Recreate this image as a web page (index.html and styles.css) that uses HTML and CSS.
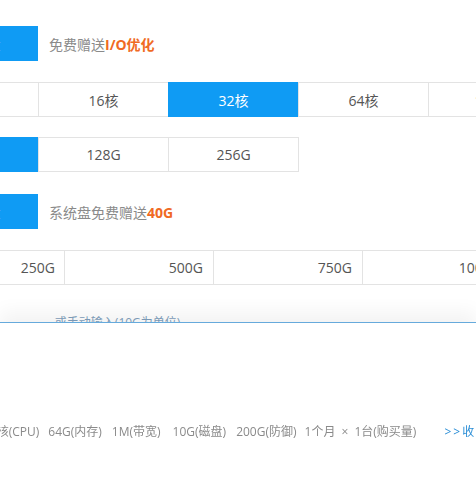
FILE: index.html
```html
<!DOCTYPE html>
<html lang="zh-CN">
<head>
<meta charset="utf-8">
<title>配置选择</title>
<link rel="stylesheet" href="styles.css">
</head>
<body>
<div class="page">
  <div class="row row-tag">
    <div class="opt opt-on">SSD云盘</div>
    <div class="note">免费赠送<b>I/O优化</b></div>
  </div>

  <div class="row row-opts full">
    <div class="opt">8核</div>
    <div class="opt">16核</div>
    <div class="opt opt-on">32核</div>
    <div class="opt">64核</div>
    <div class="opt">128核</div>
  </div>

  <div class="row row-opts">
    <div class="opt opt-on">64G</div>
    <div class="opt">128G</div>
    <div class="opt">256G</div>
  </div>

  <div class="row row-tag">
    <div class="opt opt-on">SSD云盘</div>
    <div class="note">系统盘免费赠送<b>40G</b></div>
  </div>

  <div class="row scale">
    <div class="seg seg-first">250G</div>
    <div class="seg">500G</div>
    <div class="seg">750G</div>
    <div class="seg">1000G</div>
  </div>

  <div class="hint">
    <span class="hint-a">-- </span><span class="hint-b">或手动输入(10G为单位)</span><span class="hint-c">--</span>
  </div>
</div>

<div class="bar">
  <div class="summary">
    <span class="item">32核(CPU)</span>
    <span class="item">64G(内存)</span>
    <span class="item">1M(带宽)</span>
    <span class="item">10G(磁盘)</span>
    <span class="item">200G(防御)</span>
    <span class="item item-qty">1个月 × 1台(购买量)</span>
    <a class="more" href="#">&gt;&gt;收藏配置</a>
  </div>
</div>
</body>
</html>
```

FILE: styles.css
```css
html, body {
  margin: 0;
  padding: 0;
  background: #fff;
  overflow: hidden;
}

body {
  font-family: "Open Sans", "Noto Sans CJK SC", sans-serif;
  font-size: 14px;
  color: #555;
  width: 476px;
  height: 477px;
}

.page {
  margin-left: -92px;
  width: 760px;
  padding-top: 26px;
}

.row {
  display: flex;
  align-items: stretch;
}

.row-tag {
  height: 35px;
  align-items: center;
}

.row-tag + .row-opts {
  margin-top: 21px;
}

.row-opts + .row-opts {
  margin-top: 20px;
}

.row-opts + .row-tag {
  margin-top: 22px;
}

.opt {
  box-sizing: border-box;
  flex: none;
  width: 130px;
  height: 35px;
  display: flex;
  align-items: center;
  justify-content: center;
  border: 1px solid #e3e3e3;
  border-right: 0;
  color: #555;
  background: #fff;
  white-space: nowrap;
}

.row-opts .opt:last-child {
  width: 131px;
  border-right: 1px solid #e3e3e3;
}

.opt-on {
  background: #0f9bf4;
  border-color: #0f9bf4;
  color: #fff;
}

.note {
  margin-left: 11px;
  color: #8a8a8a;
  white-space: nowrap;
}

.note b {
  color: #f06a23;
  font-weight: 700;
}

.scale {
  margin-top: 21px;
  height: 35px;
  border-top: 1px solid #e3e3e3;
  border-bottom: 1px solid #e3e3e3;
  box-sizing: border-box;
}

.seg {
  box-sizing: border-box;
  flex: none;
  width: 149px;
  display: flex;
  align-items: center;
  justify-content: flex-end;
  padding-right: 10px;
  border-right: 1px solid #e3e3e3;
  color: #555;
}

.seg-first {
  width: 157px;
  padding-right: 9px;
}

.hint {
  margin-top: 28px;
  padding-left: 92px;
  font-size: 12px;
  color: #8aa5bd;
  white-space: nowrap;
}

.hint-b {
  margin-left: 44px;
  color: #7f9fbd;
}

.hint-c {
  margin-left: 20px;
}

.bar {
  position: fixed;
  left: 0;
  right: 0;
  top: 322px;
  bottom: 0;
  background: #fff;
  border-top: 1px solid #66aadc;
  box-shadow: 0 -10px 18px rgba(0, 0, 0, 0.05);
}

.summary {
  display: flex;
  align-items: center;
  margin-top: 99px;
  margin-left: -17px;
  font-size: 12px;
  color: #8a8a8a;
  white-space: nowrap;
}

.item {
  margin-right: 10px;
}

.item:nth-child(1) {
  margin-right: 9px;
}

.item:nth-child(3) {
  margin-right: 12px;
}

.item:nth-child(5) {
  margin-right: 8px;
}

.item-qty {
  word-spacing: 3px;
}

.more {
  margin-left: 18px;
  color: #2b8ed6;
  text-decoration: none;
  letter-spacing: 2px;
}
```
